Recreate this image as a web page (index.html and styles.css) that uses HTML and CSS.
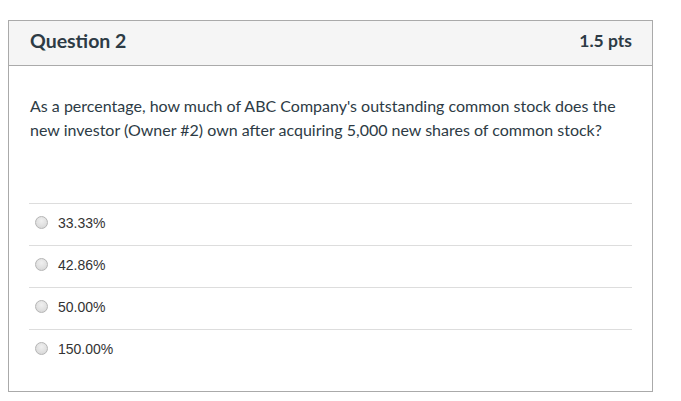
FILE: index.html
```html
<!DOCTYPE html>
<html>
<head>
<meta charset="utf-8">
<link rel="stylesheet" href="styles.css">
</head>
<body>
<div class="card">
  <div class="card-header">
    <h2 class="q-title">Question 2</h2>
    <span class="q-points">1.5 pts</span>
  </div>
  <div class="card-body">
    <p class="q-text">As a percentage, how much of ABC Company's outstanding common stock does the new investor (Owner #2) own after acquiring 5,000 new shares of common stock?</p>
    <div class="answers">
      <label class="answer"><span class="radio"></span><span class="answer-text">33.33%</span></label>
      <label class="answer"><span class="radio"></span><span class="answer-text">42.86%</span></label>
      <label class="answer"><span class="radio"></span><span class="answer-text">50.00%</span></label>
      <label class="answer"><span class="radio"></span><span class="answer-text">150.00%</span></label>
    </div>
  </div>
</div>
</body>
</html>
```

FILE: styles.css
```css
html, body {
  background: #ffffff;
}
body {
  margin: 8px;
  font-family: Lato, "Open Sans", sans-serif;
  color: #2d3b45;
}
.card {
  margin-top: 12px;
  width: 643px;
  border: 1px solid #aaaaaa;
  background: #ffffff;
}
.card-header {
  height: 39px;
  display: flex;
  align-items: center;
  justify-content: space-between;
  padding: 0 20px 5px 21px;
  background: #f5f5f5;
  border-bottom: 1px solid #aaaaaa;
}
.q-title {
  margin: 0;
  font-size: 19.5px;
  font-weight: 700;
  color: #2d3b45;
}
.q-points {
  font-size: 17.5px;
  font-weight: 700;
  color: #2d3b45;
}
.card-body {
  padding: 28px 20px 20px 20px;
}
.q-text {
  margin: 0 0 0 1px;
  font-size: 16px;
  line-height: 24px;
  color: #2d3b45;
}
.answers {
  margin-top: 61px;
}
.answer {
  display: flex;
  align-items: center;
  height: 37px;
  padding-bottom: 4px;
  border-top: 1px solid #dddddd;
}
.radio {
  width: 11px;
  height: 11px;
  margin-left: 6px;
  border: 1px solid #b5b5b5;
  border-radius: 50%;
  background: radial-gradient(circle at 50% 35%, #f0f0f0 0%, #dcdcdc 70%, #cfcfcf 100%);
}
.answer-text {
  margin-left: 10px;
  font-family: "Liberation Sans", Arial, sans-serif;
  font-size: 14px;
  color: #333333;
}
```
